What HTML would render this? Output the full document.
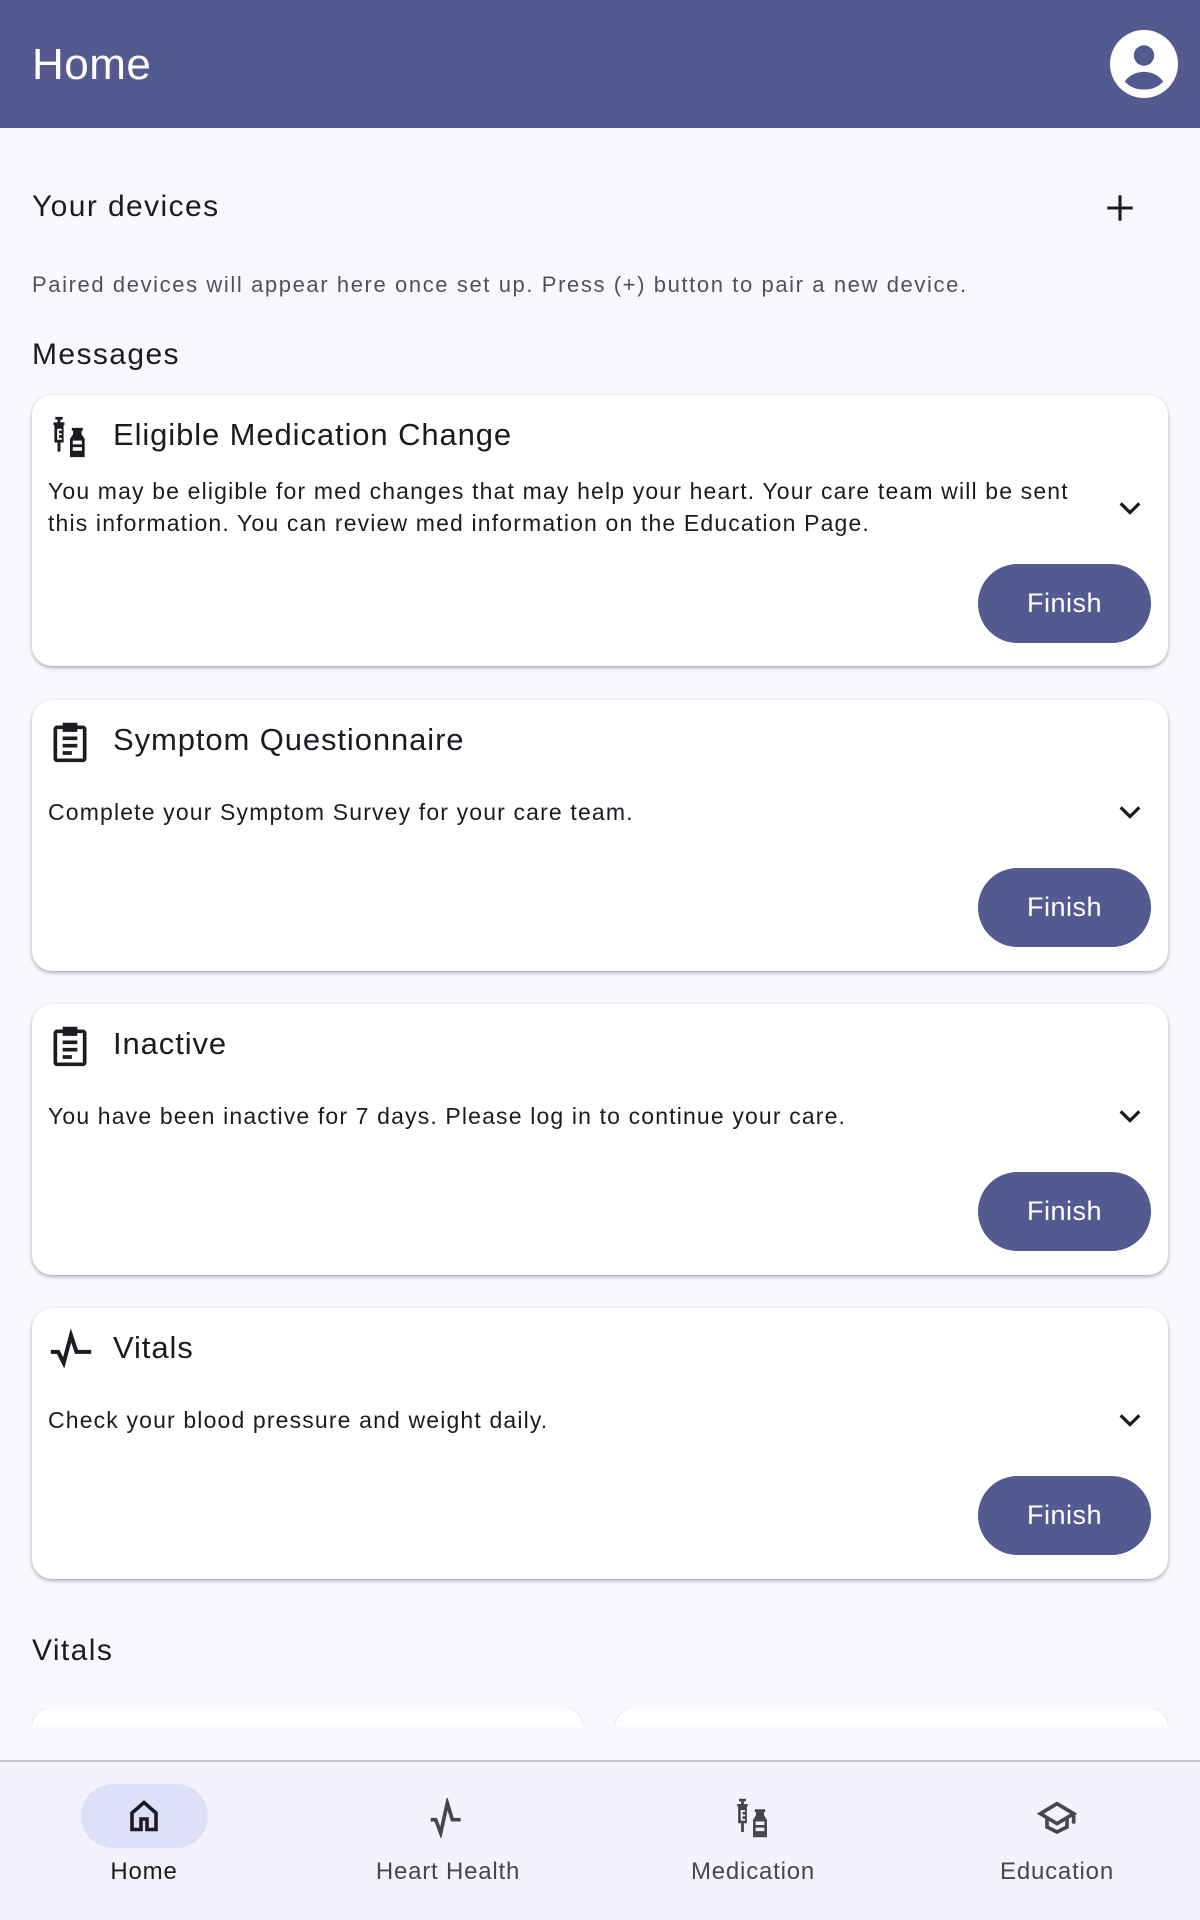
<!DOCTYPE html>
<html><head><meta charset="utf-8"><style>
*{box-sizing:border-box;margin:0;padding:0}
body{width:1200px;height:1920px;background:#faf8fe;font-family:"Liberation Sans",sans-serif;color:#1b1b21;position:relative;overflow:hidden}
.hdr{position:absolute;left:0;top:0;width:1200px;height:128px;background:#525a8f}
.hdr h1{position:absolute;left:32px;top:40px;font-size:44px;font-weight:normal;color:#fff;letter-spacing:.5px}
.abs{position:absolute}
.card{position:absolute;left:32px;width:1136px;height:271px;background:#fff;border-radius:20px;box-shadow:0 2px 4px rgba(0,0,0,.25),0 1px 2px rgba(0,0,0,.1)}
.card .t{position:absolute;left:81px;top:20px;font-size:31px;line-height:40px;letter-spacing:.9px}
.card .ic{position:absolute;left:16px;top:20px}
.card .b{position:absolute;left:16px;font-size:23px;line-height:32px;letter-spacing:1.15px;width:1060px}
.card .ch{position:absolute;left:1082px}
.btn{position:absolute;left:946px;width:173px;height:79px;border-radius:40px;background:#525a8f;color:#fff;font-size:27px;text-align:center;line-height:79px;letter-spacing:.5px}
.nav{position:absolute;left:0;top:1760px;width:1200px;height:160px;background:#f4f2fa;border-top:2px solid #c8c6d0}
.ni{position:absolute;top:96px;font-size:24px;width:240px;text-align:center;color:#45464f;letter-spacing:.8px}
.h2{position:absolute;left:32px;font-size:30px;letter-spacing:1.4px}
</style></head><body>
<div class="hdr"><h1>Home</h1>
<svg class="abs" style="left:1110px;top:30px" width="68" height="68" viewBox="0 0 24 24"><circle cx="12" cy="12" r="12" fill="#fff"/><circle cx="12" cy="9" r="3.6" fill="#525a8f"/><path d="M5.2 18.2c1.6-2.3 4.1-3.4 6.8-3.4s5.2 1.1 6.8 3.4A9.2 9.2 0 0 1 12 21a9.2 9.2 0 0 1-6.8-2.8z" fill="#525a8f"/></svg>
</div>
<div class="h2" style="top:190px">Your devices</div>
<svg class="abs" style="left:1103px;top:191px" width="34" height="34" viewBox="0 0 24 24"><path d="M12 3v18M3 12h18" stroke="#1b1b21" stroke-width="2.2"/></svg>
<div class="abs" style="left:32px;top:272px;font-size:22px;color:#50515c;letter-spacing:1.6px">Paired devices will appear here once set up. Press (+) button to pair a new device.</div>
<div class="h2" style="top:338px">Messages</div>

<div class="card" style="top:395px">
<svg class="ic" width="44" height="44" viewBox="0 0 24 24" fill="#1b1b21"><path d="M4 1h4v1.5H6.8V4H9v1.5h-.5V15H6.8v5H5.2v-5H3.5V5.5H3V4h2.2V2.5H4zM5 6.5v7h2.5v-1H6V11h1.5v-1H6V8.5h1.5v-1H5z"/><path d="M13 7h6v1.5h-.7v2L20 13v10h-8V13l1.7-2.5v-2H13zm.5 7v2h5v-2zm0 3.5v2h5v-2z"/></svg>
<div class="t">Eligible Medication Change</div>
<div class="b" style="top:80px">You may be eligible for med changes that may help your heart. Your care team will be sent this information. You can review med information on the Education Page.</div>
<svg class="ch" style="top:97px" width="32" height="32" viewBox="0 0 24 24"><path d="M5 8.5l7 7 7-7" fill="none" stroke="#1b1b21" stroke-width="2.4"/></svg>
<div class="btn" style="top:169px">Finish</div>
</div>

<div class="card" style="top:700px">
<svg class="ic" width="44" height="44" viewBox="0 0 24 24" fill="none" stroke="#1b1b21" stroke-width="2"><rect x="4" y="4" width="16" height="18" rx="1"/><path d="M9 2.5h6v3H9zM8 10h8M8 14h8M8 18h5"/></svg>
<div class="t">Symptom Questionnaire</div>
<div class="b" style="top:96px">Complete your Symptom Survey for your care team.</div>
<svg class="ch" style="top:96px" width="32" height="32" viewBox="0 0 24 24"><path d="M5 8.5l7 7 7-7" fill="none" stroke="#1b1b21" stroke-width="2.4"/></svg>
<div class="btn" style="top:168px">Finish</div>
</div>

<div class="card" style="top:1004px">
<svg class="ic" width="44" height="44" viewBox="0 0 24 24" fill="none" stroke="#1b1b21" stroke-width="2"><rect x="4" y="4" width="16" height="18" rx="1"/><path d="M9 2.5h6v3H9zM8 10h8M8 14h8M8 18h5"/></svg>
<div class="t">Inactive</div>
<div class="b" style="top:96px">You have been inactive for 7 days. Please log in to continue your care.</div>
<svg class="ch" style="top:96px" width="32" height="32" viewBox="0 0 24 24"><path d="M5 8.5l7 7 7-7" fill="none" stroke="#1b1b21" stroke-width="2.4"/></svg>
<div class="btn" style="top:168px">Finish</div>
</div>

<div class="card" style="top:1308px">
<svg class="ic" width="46" height="44" viewBox="0 0 24 24" fill="none" stroke="#1b1b21" stroke-width="2.2"><path d="M1 13h4l3 6 4-15 3 9h8"/></svg>
<div class="t">Vitals</div>
<div class="b" style="top:96px">Check your blood pressure and weight daily.</div>
<svg class="ch" style="top:96px" width="32" height="32" viewBox="0 0 24 24"><path d="M5 8.5l7 7 7-7" fill="none" stroke="#1b1b21" stroke-width="2.4"/></svg>
<div class="btn" style="top:168px">Finish</div>
</div>

<div class="h2" style="top:1634px">Vitals</div>
<div class="abs" style="left:32px;top:1708px;width:551px;height:19px;overflow:hidden"><div style="height:60px;background:#fff;border-radius:20px;box-shadow:0 1px 3px rgba(0,0,0,.2)"></div></div>
<div class="abs" style="left:615px;top:1708px;width:553px;height:19px;overflow:hidden"><div style="height:60px;background:#fff;border-radius:20px;box-shadow:0 1px 3px rgba(0,0,0,.2)"></div></div>

<div class="nav">
<div class="abs" style="left:81px;top:22px;width:127px;height:64px;border-radius:32px;background:#dfe0f8"></div>
<svg class="abs" style="left:126px;top:35px" width="36" height="38" viewBox="0 0 24 24" fill="none" stroke="#1b1b21" stroke-width="2.4"><path d="M4 21V10l8-7 8 7v11h-6v-7h-4v7z"/></svg>
<svg class="abs" style="left:427px;top:36px" width="44" height="40" viewBox="0 0 24 24" fill="none" stroke="#45464f" stroke-width="2.2"><path d="M1 13h3l3 8 4-18 3 10h5"/></svg>
<svg class="abs" style="left:732px;top:34px" width="42" height="44" viewBox="0 0 24 24" fill="#45464f"><path d="M4 1h4v1.5H6.8V4H9v1.5h-.5V15H6.8v5H5.2v-5H3.5V5.5H3V4h2.2V2.5H4zM5 6.5v7h2.5v-1H6V11h1.5v-1H6V8.5h1.5v-1H5z"/><path d="M13 7h6v1.5h-.7v2L20 13v10h-8V13l1.7-2.5v-2H13zm.5 7v2h5v-2zm0 3.5v2h5v-2z"/></svg>
<svg class="abs" style="left:1036px;top:35px" width="42" height="40" viewBox="0 0 24 24" fill="none" stroke="#45464f" stroke-width="2.2"><path d="M2 10l10-6 10 6-10 6zM6 12v6l6 3 6-3v-6M22 10v6"/></svg>
<div class="ni" style="left:24px;color:#1b1b21">Home</div>
<div class="ni" style="left:328px">Heart Health</div>
<div class="ni" style="left:633px">Medication</div>
<div class="ni" style="left:937px">Education</div>
</div>
</body></html>
